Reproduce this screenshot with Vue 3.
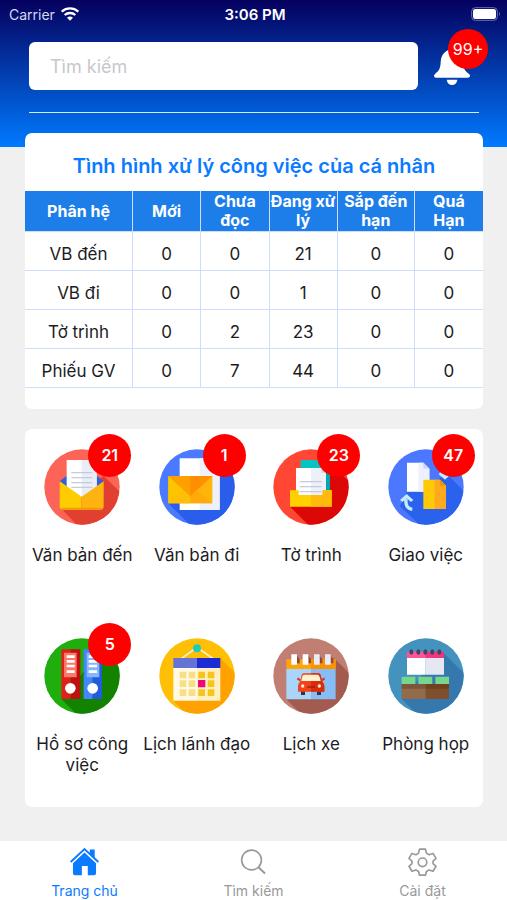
<template>
  <div class="screen">
    <header class="top">
      <!-- Thanh trạng thái -->
      <div class="status-bar">
        <div class="carrier">
          <span>Carrier</span>
          <svg class="wifi" viewBox="0 0 54 42">
            <path d="M27 41l-9-9c5-5 13-5 18 0z" fill="#fff" />
            <path d="M11 24c9-8 23-8 32 0" fill="none" stroke="#fff" stroke-width="7" />
            <path d="M2 14c14-13 36-13 50 0" fill="none" stroke="#fff" stroke-width="7" />
          </svg>
        </div>
        <span class="time">3:06 PM</span>
        <svg class="battery" viewBox="0 0 90 42">
          <rect x="2" y="2" width="77" height="38" rx="11" fill="none" stroke="#6f6db0" stroke-width="3" />
          <rect x="6" y="6" width="69" height="30" rx="7" fill="#fff" />
          <path d="M84 15q6 6 0 12z" fill="#6f6db0" />
        </svg>
      </div>

      <!-- Tìm kiếm và thông báo -->
      <div class="search-row">
        <input v-model="keyword" class="search" type="text" placeholder="Tìm kiếm" aria-label="Tìm kiếm">
        <button class="bell" aria-label="Thông báo">
          <svg viewBox="0 0 108 114">
            <path d="M46 8a8 8 0 0 1 16 0c18 6 25 19 26 38 0 22 6 26 16 34 8 6 3 12-2 12H6c-6 0-9-7-2-12 10-8 15-13 16-34 1-19 8-32 26-38z" fill="#fff" />
            <path d="M38 98h32c-2 21-30 21-32 0z" fill="#fff" />
          </svg>
          <span class="bell-count">99+</span>
        </button>
      </div>
      <div class="divider"></div>
    </header>

    <main class="content">
      <!-- Bảng tình hình xử lý -->
      <section class="card summary">
        <h2>Tình hình xử lý công việc của cá nhân</h2>
        <table>
          <colgroup>
            <col class="col-name">
            <col class="col-num">
            <col class="col-num">
            <col class="col-num">
            <col class="col-wide">
            <col class="col-num">
          </colgroup>
          <thead>
            <tr>
              <th v-for="column in columns" :key="column">{{ column }}</th>
            </tr>
          </thead>
          <tbody>
            <tr v-for="row in rows" :key="row.name">
              <td>{{ row.name }}</td>
              <td v-for="(value, index) in row.values" :key="index">{{ value }}</td>
            </tr>
          </tbody>
        </table>
      </section>

      <!-- Các phân hệ -->
      <section class="card menu">
        <button v-for="item in menu" :key="item.id" class="menu-item">
          <span class="icon-wrap">
            <svg class="menu-icon" viewBox="0 0 228 228">
              <defs>
                <clipPath :id="'clip-' + item.id">
                  <circle cx="114" cy="114" r="113" />
                </clipPath>
              </defs>
              <g :clip-path="`url(#clip-${item.id})`">
                <rect width="228" height="228" :fill="item.color" />
                <path :d="item.shadowPath" :fill="item.shadow" />

                <g v-if="item.id === 'incoming'">
                  <path d="M47 97l21-17h90l21 17-67 48z" fill="#2f62d9" />
                  <path d="M68 33h90v80l-46 32-44-32z" fill="#fff" />
                  <path d="M113 33h45v80l-45 32z" fill="#e9edf5" />
                  <path d="M82 71h63M82 86h63M82 101h63M82 115h63" stroke="#c3cbdc" stroke-width="4" />
                  <path d="M47 97l66 46v39H57q-10 0-10-10z" fill="#ffcc00" />
                  <path d="M179 97l-66 46v39h56q10 0 10-10z" fill="#ffb310" />
                  <path d="M50 180l6-4h114l6 4q-3 2-7 2H57q-4 0-7-2z" fill="#f29a0a" />
                </g>

                <g v-else-if="item.id === 'outgoing'">
                  <path d="M62 28h120v155H62z" fill="#fff" />
                  <path d="M122 28h60v155h-60z" fill="#eef0fa" />
                  <path d="M28 81h132v82H28z" fill="#ffb40a" />
                  <path d="M28 81l52 40-52 42z" fill="#ffc400" />
                  <path d="M28 163l66-52 66 52z" fill="#ffa90c" />
                  <path d="M28 163l66-52v52z" fill="#ffbe0a" />
                  <path d="M28 81h132l-66 60z" fill="#ff8f00" />
                  <path d="M28 81h66v60z" fill="#ffa000" />
                </g>

                <g v-else-if="item.id === 'report'">
                  <path d="M83 33h64l24 24v80H83z" fill="#07c4c4" />
                  <path d="M147 33l24 24v80h-24z" fill="#00a6ad" />
                  <path d="M51 124h125v20H51z" fill="#e58b00" />
                  <path d="M69 57h76l14 14v67H69z" fill="#fff" />
                  <path d="M114 57h31l14 14v67h-45z" fill="#eef0f7" />
                  <path d="M145 57v14h14z" fill="#cdd2e1" />
                  <path d="M80 98h66M80 113h66M80 128h66" stroke="#c5c9dc" stroke-width="4" />
                  <path d="M51 124h26v14h72v-14h27v49H51z" fill="#ffd000" />
                  <path d="M114 138h35v-14h27v49h-62z" fill="#ffba0c" />
                </g>

                <g v-else-if="item.id === 'assign'">
                  <path d="M57 41h49l18 18v69H57z" fill="#fff" />
                  <path d="M91 41h15l18 18v69H91z" fill="#edf1ff" />
                  <path d="M106 41v18h18z" fill="#cbd6fa" />
                  <path d="M106 92h50l18 18v70h-68z" fill="#ffc909" />
                  <path d="M140 92h16l18 18v70h-34z" fill="#ffa91d" />
                  <path d="M156 92v18h18z" fill="#f39200" />
                  <path d="M73 181c-16-2-21-14-19-32" fill="none" stroke="#c5eafa" stroke-width="10" />
                  <path d="M36 153l20-18 20 18-7 6-13-11-13 11z" fill="#c5eafa" />
                  <path d="M151 50c16 2 21 14 19 30m-15-8l16 14 16-15" fill="none" stroke="#c5eafa" stroke-width="9" />
                </g>

                <g v-else-if="item.id === 'files'">
                  <path d="M52 34h28v149H52z" fill="#df201d" />
                  <path d="M80 34h29v149H80z" fill="#bd100f" />
                  <path d="M60 44h38v74H60z" fill="#ff7769" />
                  <path d="M68 56h24M68 70h24M68 84h24M68 101h24" stroke="#fff" stroke-width="8" />
                  <path d="M119 34h27v149h-27z" fill="#4387ff" />
                  <path d="M146 34h28v149h-28z" fill="#225bdc" />
                  <path d="M128 44h38v74h-38z" fill="#86b5ff" />
                  <path d="M134 56h25M134 70h25M134 84h25M134 101h25" stroke="#fff" stroke-width="8" />
                  <circle cx="79" cy="151" r="16" fill="#fff" />
                  <circle cx="146" cy="151" r="16" fill="#fff" />
                </g>

                <g v-else-if="item.id === 'leader'">
                  <path d="M67 62l47-34 48 34" fill="none" stroke="#fff5d5" stroke-width="5" />
                  <circle cx="114" cy="31" r="12" fill="#20cbbb" />
                  <path d="M43 90h71v98H43z" fill="#fff9e5" />
                  <path d="M114 90h70v98h-70z" fill="#fff0c4" />
                  <path d="M43 60h71v30H43z" fill="#6572d6" />
                  <path d="M114 60h70v30h-70z" fill="#1c2bd3" />
                  <path d="M62 101h20v20H62zM89 101h20v20H89zM62 127h20v20H62zM89 127h20v20H89zM62 154h20v20H62zM89 154h20v20H89z" fill="#f7df86" />
                  <path d="M118 101h20v20h-20zM146 101h20v20h-20zM146 127h20v20h-20zM118 154h20v20h-20zM146 154h20v20h-20z" fill="#f5c51c" />
                  <path d="M117 126h22v22h-22z" fill="#ed087d" />
                </g>

                <g v-else-if="item.id === 'car'">
                  <path d="M40 93h74v91H40z" fill="#a9d4fc" />
                  <path d="M114 93h74v91h-74z" fill="#86bdf4" />
                  <path d="M40 64h148v29H40z" fill="#ffa50b" />
                  <path d="M114 64h74v29h-74z" fill="#fb9300" />
                  <path d="M72 54l8 10v12h-8zM106 54l8 10v12h-8zM140 54l8 10v12h-8zM173 54l8 10v12h-8z" fill="#8b493f" />
                  <path d="M55 49h17v31H55zM89 49h17v31H89z" fill="#fff" />
                  <path d="M123 49h17v31h-17zM156 49h17v31h-17z" fill="#e9edf9" />
                  <path d="M84 157h12v14H84zM132 157h12v14h-12z" fill="#38343c" />
                  <path d="M92 106h44q6 0 8 10l4 15q6 5 6 13v17H75v-17q0-8 6-13l4-15q2-10 7-10z" fill="#f0431d" />
                  <path d="M114 106h22q6 0 8 10l4 15q6 5 6 13v17h-40z" fill="#d92c0c" />
                  <path d="M92 110h43q4 0 8 19H85q3-19 7-19z" fill="#fff2cf" />
                  <path d="M73 121l9 6M155 121l-9 6" stroke="#df351a" stroke-width="6" />
                  <circle cx="89" cy="144" r="5" fill="#fff1ce" />
                  <circle cx="139" cy="144" r="5" fill="#fff1ce" />
                  <path d="M103 147h23" stroke="#9d230d" stroke-width="4" />
                </g>

                <g v-else>
                  <path d="M57 58h56v52H57z" fill="#fff" />
                  <path d="M113 58h55v52h-55z" fill="#e5e7f3" />
                  <path d="M57 41h56v19H57z" fill="#ff5399" />
                  <path d="M113 41h55v19h-55z" fill="#f1347e" />
                  <g fill="#3d455f">
                    <ellipse cx="70" cy="42" rx="6" ry="8" />
                    <ellipse cx="91" cy="42" rx="6" ry="8" />
                    <ellipse cx="112" cy="42" rx="6" ry="8" />
                    <ellipse cx="133" cy="42" rx="6" ry="8" />
                    <ellipse cx="154" cy="42" rx="6" ry="8" />
                  </g>
                  <path d="M41 116h41v22H41zM91 116h42v22H91zM142 116h41v22h-41z" fill="#77d58e" />
                  <path d="M41 138h72v45H41z" fill="#946a4b" />
                  <path d="M113 138h70v45h-70z" fill="#80502d" />
                  <path d="M41 138h72v14H41z" fill="#7c553d" />
                  <path d="M113 138h70v14h-70z" fill="#70401f" />
                </g>
              </g>
            </svg>
            <span v-if="item.count" class="badge">{{ item.count }}</span>
          </span>
          <span class="menu-label">{{ item.label }}</span>
        </button>
      </section>
    </main>

    <!-- Thanh điều hướng dưới -->
    <nav class="tabs">
      <a href="#home" class="tab active">
        <svg viewBox="0 0 88 84">
          <path d="M9 46l35-33 35 33v30q0 6-6 6H54V54H36v28H15q-6 0-6-6z" fill="currentColor" />
          <path d="M2 42L44 3l42 39" fill="none" stroke="currentColor" stroke-width="6" />
          <path d="M60 4h15v28L60 18z" fill="currentColor" />
        </svg>
        <span>Trang chủ</span>
      </a>
      <a href="#search" class="tab">
        <svg viewBox="0 0 88 84">
          <circle cx="38" cy="36" r="30" fill="none" stroke="currentColor" stroke-width="5" />
          <path d="M59 58l20 19" stroke="currentColor" stroke-width="6" />
        </svg>
        <span>Tìm kiếm</span>
      </a>
      <a href="#settings" class="tab">
        <svg viewBox="0 0 88 84" fill="none" stroke="currentColor" stroke-width="5" stroke-linejoin="round">
          <path d="M35 3h18l3 12 8 5 12-4 9 15-9 8v8l9 8-9 15-12-4-8 5-3 11H35l-3-11-8-5-12 4-9-15 9-8v-8l-9-8 9-15 12 4 8-5z" />
          <circle cx="44" cy="43" r="13" />
        </svg>
        <span>Cài đặt</span>
      </a>
    </nav>
  </div>
</template>

<script setup>
import { ref } from 'vue'

const keyword = ref('')

const columns = ['Phân hệ', 'Mới', 'Chưa đọc', 'Đang xử lý', 'Sắp đến hạn', 'Quá Hạn']

const rows = [
  { name: 'VB đến', values: [0, 0, 21, 0, 0] },
  { name: 'VB đi', values: [0, 0, 1, 0, 0] },
  { name: 'Tờ trình', values: [0, 2, 23, 0, 0] },
  { name: 'Phiếu GV', values: [0, 7, 44, 0, 0] }
]

const menu = [
  { id: 'incoming', label: 'Văn bản đến', count: 21, color: '#fb6457', shadow: '#e14030', shadowPath: 'M51 178L179 80l60 60v100H110z' },
  { id: 'outgoing', label: 'Văn bản đi', count: 1, color: '#4a7aff', shadow: '#2a5deb', shadowPath: 'M28 163L182 28l60 60v140H93z' },
  { id: 'report', label: 'Tờ trình', count: 23, color: '#ff4733', shadow: '#dc0808', shadowPath: 'M51 173L171 40l70 70v120H108z' },
  { id: 'assign', label: 'Giao việc', count: 47, color: '#4c78ff', shadow: '#2a61ed', shadowPath: 'M57 128h49l68-55 60 60v100H100L36 172z' },
  { id: 'files', label: 'Hồ sơ công việc', count: 5, color: '#20ad0e', shadow: '#128200', shadowPath: 'M52 183L174 34l60 60v140H103z' },
  { id: 'leader', label: 'Lịch lãnh đạo', color: '#ffbf05', shadow: '#ffa200', shadowPath: 'M43 188L184 60l50 50v124H89z' },
  { id: 'car', label: 'Lịch xe', color: '#c17e73', shadow: '#a35a4f', shadowPath: 'M40 184L183 60l51 51v123H90z' },
  { id: 'room', label: 'Phòng họp', color: '#4393be', shadow: '#3478ae', shadowPath: 'M41 183L163 41l71 71v122H92z' }
]
</script>

<style>
body {
  margin: 0;
  background: #f0f0f0;
}
</style>

<style scoped>
.screen {
  display: flex;
  flex-direction: column;
  min-height: 100vh;
  font-family: Inter, "Liberation Sans", sans-serif;
  color: #1c1c1e;
}

button {
  padding: 0;
  border: none;
  background: none;
  font: inherit;
  color: inherit;
  cursor: pointer;
}

svg {
  display: block;
}

.top {
  height: 147px;
  background: linear-gradient(#05005e, #007aff);
}

/* Thanh trạng thái */
.status-bar {
  display: grid;
  grid-template-columns: 1fr auto 1fr;
  align-items: center;
  height: 28px;
  padding: 0 6px 0 9px;
  color: #fff;
  font-size: 14px;
}

.carrier {
  display: flex;
  align-items: center;
  gap: 6px;
  color: #d8d8ee;
}

.wifi {
  width: 18px;
  height: 14px;
}

.time {
  font-size: 15px;
  font-weight: 600;
}

.battery {
  width: 30px;
  height: 14px;
  justify-self: end;
}

/* Tìm kiếm */
.search-row {
  display: flex;
  align-items: center;
  gap: 16px;
  padding: 14px 37px 0 29px;
}

.search {
  flex: 1;
  min-width: 0;
  height: 48px;
  box-sizing: border-box;
  padding: 0 21px;
  border: none;
  border-radius: 6px;
  background: #fff;
  font-family: inherit;
  font-size: 18px;
}

.search::placeholder {
  color: #c7c7cc;
  opacity: 1;
}

.bell {
  position: relative;
  width: 36px;
  height: 38px;
}

.bell svg {
  width: 36px;
  height: 38px;
}

.bell-count {
  position: absolute;
  top: -18px;
  right: -18px;
  width: 40px;
  height: 40px;
  border-radius: 50%;
  background: #f00;
  color: #fff;
  font-size: 16px;
  line-height: 40px;
  text-align: center;
}

.divider {
  height: 1px;
  margin: 22px 28px 0 29px;
  background: #d4ecff;
}

/* Nội dung */
.content {
  display: flex;
  flex: 1;
  flex-direction: column;
  gap: 20px;
  margin-top: -14px;
  padding: 0 24px 34px 25px;
}

.card {
  border-radius: 7px;
  background: #fff;
}

.summary {
  padding: 20px 0 21px;
}

.summary h2 {
  margin: 0 0 12px;
  color: #0a7aff;
  font-size: 20px;
  font-weight: 600;
  line-height: 26px;
  text-align: center;
}

table {
  width: 100%;
  table-layout: fixed;
  border-collapse: separate;
  border-spacing: 0;
}

.col-name {
  width: 108px;
}

.col-wide {
  width: 77px;
}

th,
td {
  box-sizing: border-box;
  height: 39px;
  padding: 0;
  border-right: 1px solid #d0dcff;
  border-bottom: 1px solid #d0dcff;
  font-size: 17px;
  text-align: center;
}

td {
  padding-top: 6px;
  line-height: 20px;
}

th {
  height: 41px;
  background: #1d7eea;
  color: #fff;
  font-size: 16px;
  font-weight: 700;
  line-height: 19px;
}

th:last-child,
td:last-child {
  border-right: none;
}

th:last-child {
  padding: 0 8px;
}

/* Phân hệ */
.menu {
  display: grid;
  grid-template-columns: repeat(4, 1fr);
  grid-auto-rows: 189px;
}

.menu-item {
  display: flex;
  flex-direction: column;
  align-items: center;
  gap: 20px;
  padding-top: 20px;
}

.icon-wrap {
  position: relative;
}

.menu-icon {
  width: 76px;
  height: 76px;
}

.badge {
  position: absolute;
  top: -15px;
  right: -11px;
  width: 43px;
  height: 43px;
  border-radius: 50%;
  background: #f00;
  color: #fff;
  font-size: 16px;
  font-weight: 600;
  line-height: 43px;
  text-align: center;
}

.menu-label {
  font-size: 17px;
  line-height: 21px;
}

/* Điều hướng */
.tabs {
  display: grid;
  grid-template-columns: repeat(3, 1fr);
  height: 59px;
  background: #fff;
}

.tab {
  display: flex;
  flex-direction: column;
  align-items: center;
  gap: 6px;
  padding-top: 7px;
  color: #999;
  font-size: 14px;
  line-height: 18px;
  text-decoration: none;
}

.tab svg {
  width: 29px;
  height: 28px;
}

.tab.active {
  color: #0a7aff;
}
</style>
